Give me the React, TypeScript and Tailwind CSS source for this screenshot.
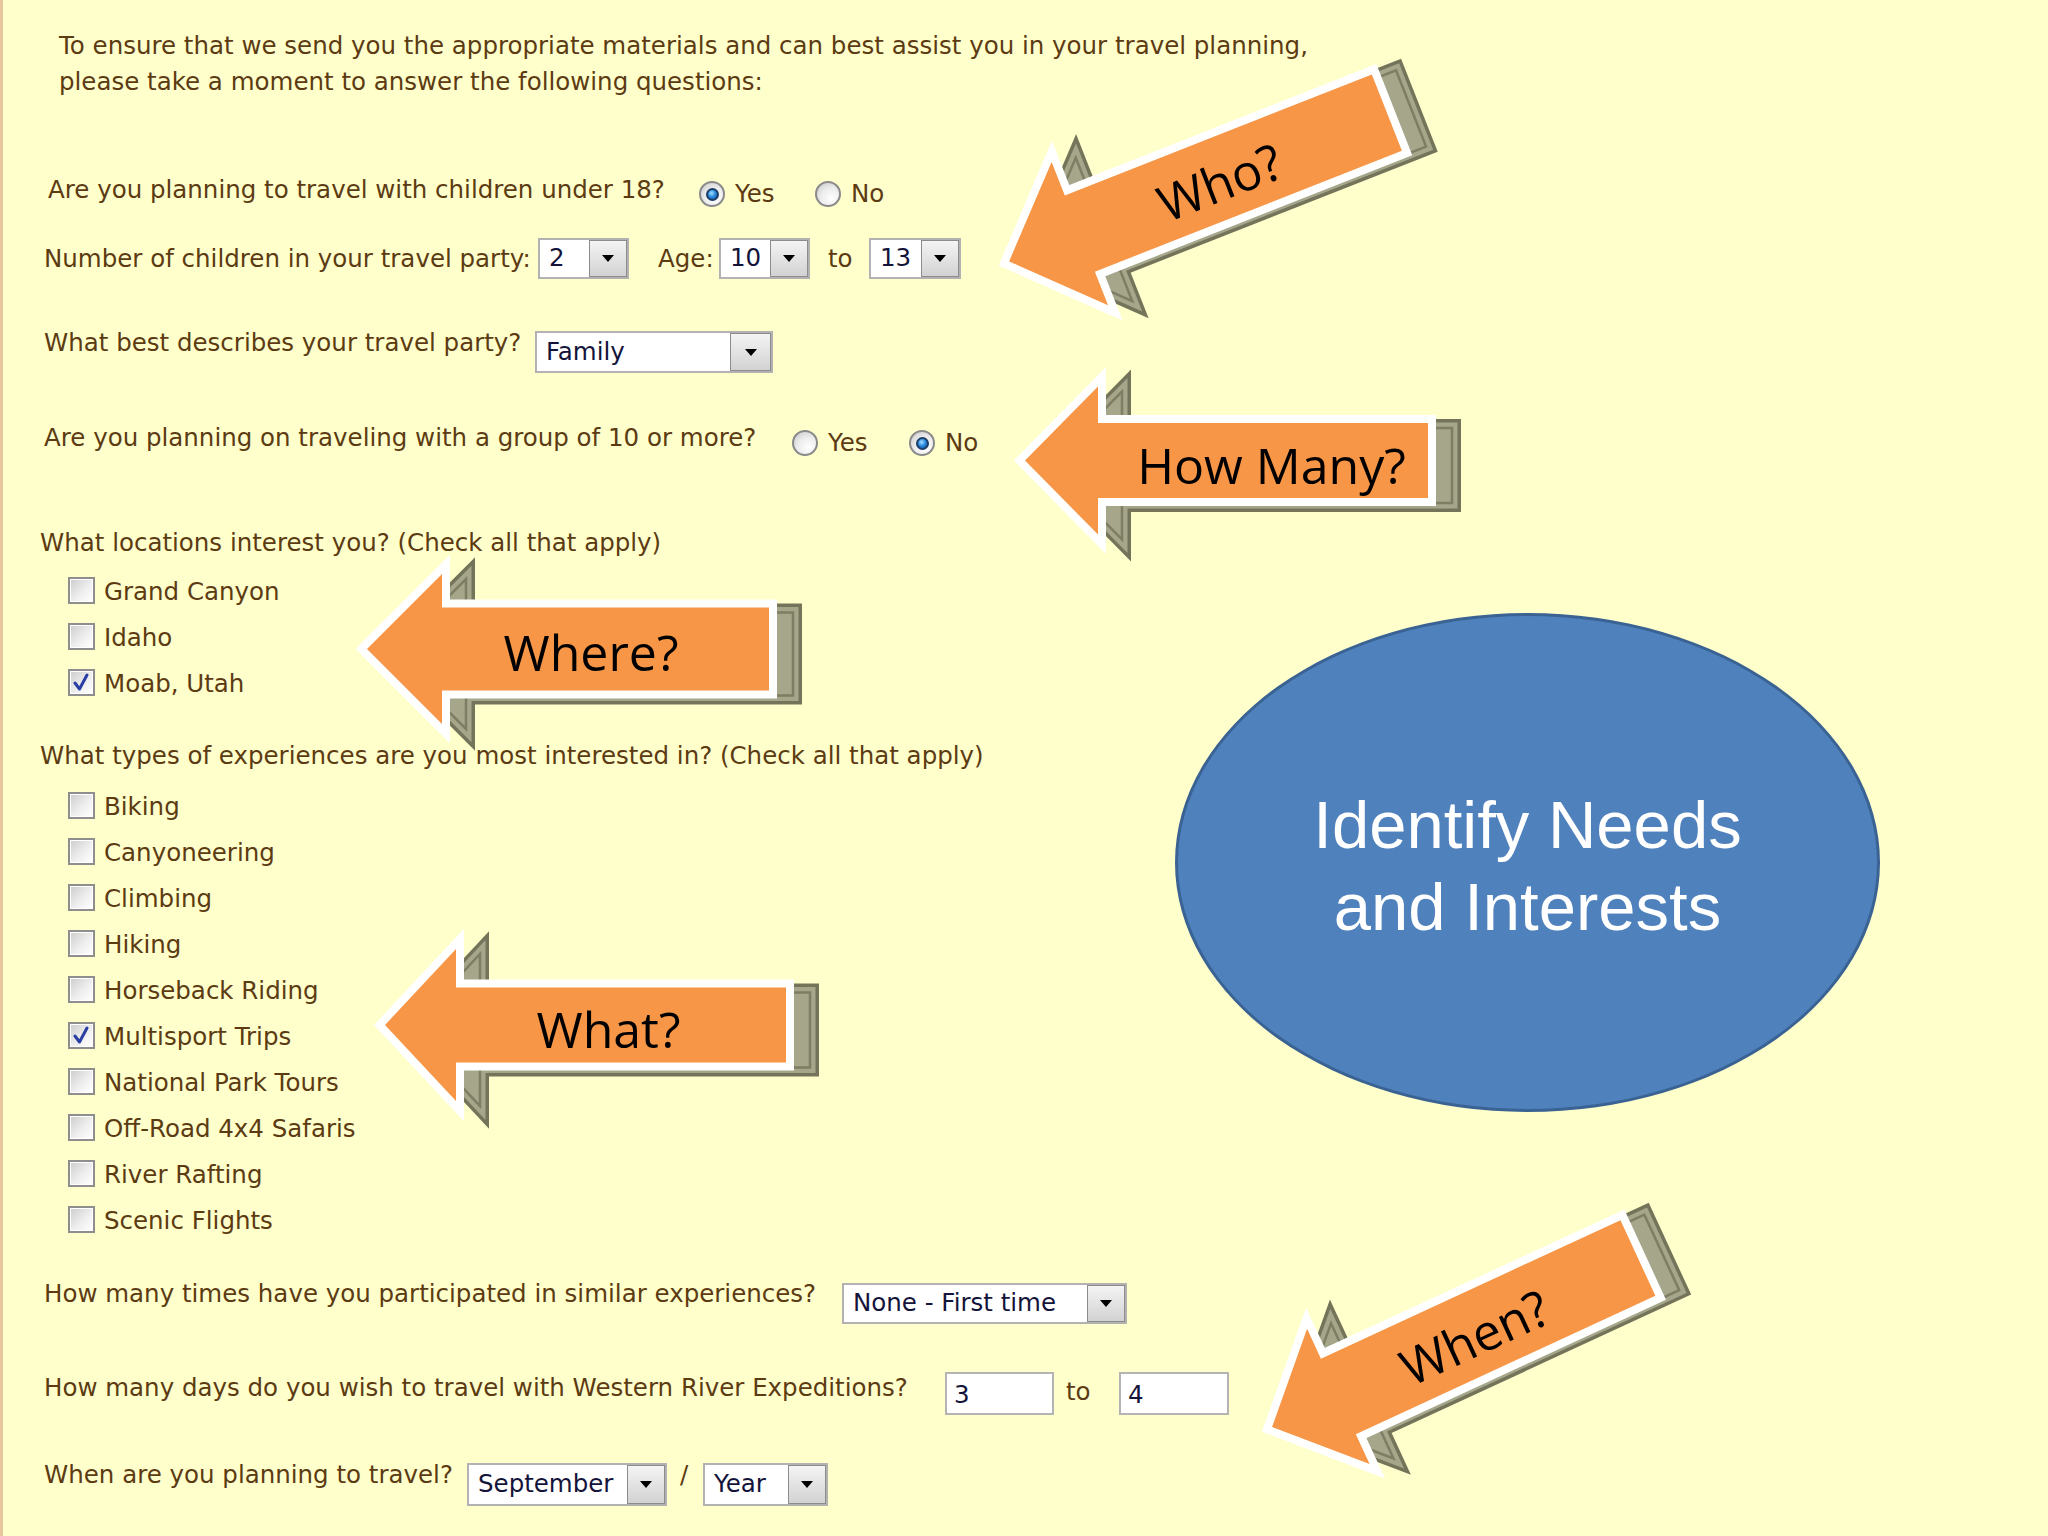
import React from "react";

const TXT = "text-[24.5px] leading-[30px] text-[#5c3b12] whitespace-nowrap";

function Radio({ checked }: { checked?: boolean }) {
  return (
    <span className="flex h-[26px] w-[26px] shrink-0 items-center justify-center rounded-full border-2 border-[#8a8a8a] bg-[radial-gradient(circle_at_65%_70%,#ffffff_0%,#ececec_50%,#c4c4c4_100%)]">
      {checked && (
        <span className="h-[13px] w-[13px] rounded-full border-2 border-[#1d3d66] bg-[radial-gradient(circle_at_40%_35%,#a8e0ff_0%,#2f90e2_45%,#0b4f9a_100%)]" />
      )}
    </span>
  );
}

function Option({ label, checked, className }: { label: string; checked?: boolean; className: string }) {
  return (
    <div className={`flex shrink-0 items-center gap-[10px] ${className}`}>
      <Radio checked={checked} />
      <span className={TXT}>{label}</span>
    </div>
  );
}

function Box({ label, checked }: { label: string; checked?: boolean }) {
  return (
    <div className="flex h-[46px] items-center gap-[9px]">
      <span className="flex h-[27px] w-[27px] shrink-0 border-2 border-[#8e8e8e] bg-white p-[1px]">
        <span className="relative h-full w-full bg-[linear-gradient(135deg,#cfcfcf_0%,#eeeeee_55%,#ffffff_100%)]">
          {checked && (
            <svg className="absolute left-0 top-0" width="21" height="21" viewBox="0 0 21 21">
              <path d="M4 11 L8.5 17 L16 3" fill="none" stroke="#2b3ea3" strokeWidth="3" strokeLinecap="round" strokeLinejoin="round" />
            </svg>
          )}
        </span>
      </span>
      <span className={`${TXT} mt-[4px]`}>{label}</span>
    </div>
  );
}

function Select({ value, className, btn = "w-[38px]" }: { value: string; className: string; btn?: string }) {
  return (
    <div className={`flex shrink-0 border-2 border-[#b2b2b2] bg-white ${className}`}>
      <span className="flex flex-1 items-center pl-[9px] text-[24.5px] text-[#14143a] whitespace-nowrap">{value}</span>
      <span className={`flex items-center justify-center border border-[#8c8c8c] bg-[linear-gradient(#f4f4f4,#d2d2d2)] ${btn}`}>
        <span className="h-0 w-0 border-x-[6px] border-t-[7px] border-x-transparent border-t-black" />
      </span>
    </div>
  );
}

function Input({ value, className }: { value: string; className: string }) {
  return (
    <div className={`flex shrink-0 items-center border-2 border-[#b4b4b4] bg-white pl-[7px] pt-[4px] text-[24.5px] text-[#14143a] ${className}`}>
      {value}
    </div>
  );
}

type ArrowProps = {
  x: number;
  y: number;
  angle?: number;
  len: number;
  head: number;
  headH: number;
  shaftH: number;
  label: string;
  tx: number;
  ty: number;
};

function Arrow({ x, y, angle = 0, len, head, headH, shaftH, label, tx, ty }: ArrowProps) {
  const h = len / 2;
  const pts = [
    [-h, 0],
    [-h + head, -headH],
    [-h + head, -shaftH],
    [h, -shaftH],
    [h, shaftH],
    [-h + head, shaftH],
    [-h + head, headH],
  ]
    .map((p) => p.join(","))
    .join(" ");
  return (
    <g transform={`translate(${x} ${y}) rotate(${angle})`}>
      {/* 3d extrusion */}
      <g transform="translate(24 5)">
        <polygon points={pts} fill="#a6a68b" stroke="#74745b" strokeWidth={18} />
        <polygon points={pts} fill="#a6a68b" stroke="#a6a68b" strokeWidth={11} />
        <polygon points={pts} fill="none" stroke="#7e7e65" strokeWidth={2.5} />
      </g>
      <polygon points={pts} fill="#F79646" stroke="#ffffff" strokeWidth={16} paintOrder="stroke" />
      <text
        x={tx}
        y={ty}
        textAnchor="middle"
        dominantBaseline="central"
        fontFamily="'Open Sans', sans-serif"
        fontSize={50}
        fill="#000"
      >
        {label}
      </text>
    </g>
  );
}

const locations = [
  { label: "Grand Canyon" },
  { label: "Idaho" },
  { label: "Moab, Utah", checked: true },
];

const experiences = [
  { label: "Biking" },
  { label: "Canyoneering" },
  { label: "Climbing" },
  { label: "Hiking" },
  { label: "Horseback Riding" },
  { label: "Multisport Trips", checked: true },
  { label: "National Park Tours" },
  { label: "Off-Road 4x4 Safaris" },
  { label: "River Rafting" },
  { label: "Scenic Flights" },
];

export default function App() {
  return (
    <div className="relative h-[1536px] w-[2048px] overflow-hidden bg-[#FFFFCC] font-['DejaVu_Sans',sans-serif]">
      <div className="absolute left-0 top-0 h-full w-[3px] bg-[#E6C79C]" />

      {/* Form */}
      <div className="flex flex-col pt-[28px]">
        <div className="ml-[59px] text-[24.5px] leading-[36px] text-[#5c3b12] whitespace-nowrap">
          <p>To ensure that we send you the appropriate materials and can best assist you in your travel planning,</p>
          <p>please take a moment to answer the following questions:</p>
        </div>

        {/* children under 18 */}
        <div className="ml-[48px] mt-[70px] flex h-[40px] items-center">
          <span className={`${TXT} w-[651px] shrink-0`}>Are you planning to travel with children under 18?</span>
          <Option label="Yes" checked className="mt-[8px] w-[116px]" />
          <Option label="No" className="mt-[8px] w-[100px]" />
        </div>

        {/* number of children */}
        <div className="ml-[44px] mt-[28px] flex h-[41px] items-center">
          <span className={`${TXT} w-[494px] shrink-0`}>Number of children in your travel party:</span>
          <Select value="2" className="h-[41px] w-[91px]" />
          <span className={`${TXT} ml-[29px] w-[61px] shrink-0`}>Age:</span>
          <Select value="10" className="h-[41px] w-[91px]" />
          <span className={`${TXT} ml-[18px] w-[41px] shrink-0`}>to</span>
          <Select value="13" className="h-[41px] w-[92px]" />
        </div>

        {/* travel party */}
        <div className="ml-[44px] mt-[49px] flex items-start">
          <span className={`${TXT} w-[491px] shrink-0`}>What best describes your travel party?</span>
          <Select value="Family" className="mt-[3px] h-[42px] w-[238px]" btn="w-[41px]" />
        </div>

        {/* group */}
        <div className="ml-[44px] mt-[47px] flex h-[40px] items-center">
          <span className={`${TXT} mb-[5px] w-[748px] shrink-0`}>Are you planning on traveling with a group of 10 or more?</span>
          <Option label="Yes" className="mt-[6px] w-[117px]" />
          <Option label="No" checked className="mt-[6px] w-[100px]" />
        </div>

        {/* locations */}
        <div className={`${TXT} ml-[40px] mt-[68px]`}>What locations interest you? (Check all that apply)</div>
        <div className="ml-[68px] mt-[9px] flex flex-col">
          {locations.map((l) => (
            <Box key={l.label} label={l.label} checked={l.checked} />
          ))}
        </div>

        {/* experiences */}
        <div className={`${TXT} ml-[40px] mt-[36px]`}>What types of experiences are you most interested in? (Check all that apply)</div>
        <div className="ml-[68px] mt-[11px] flex flex-col">
          {experiences.map((e) => (
            <Box key={e.label} label={e.label} checked={e.checked} />
          ))}
        </div>

        {/* similar experiences */}
        <div className="ml-[44px] mt-[37px] flex items-start">
          <span className={`${TXT} w-[798px] shrink-0`}>How many times have you participated in similar experiences?</span>
          <Select value="None - First time" className="mt-[4px] h-[41px] w-[285px]" />
        </div>

        {/* days */}
        <div className="ml-[44px] mt-[48px] flex items-start">
          <span className={`${TXT} mt-[1px] w-[901px] shrink-0`}>How many days do you wish to travel with Western River Expeditions?</span>
          <Input value="3" className="h-[43px] w-[109px]" />
          <span className={`${TXT} ml-[12px] w-[53px] shrink-0 leading-[40px]`}>to</span>
          <Input value="4" className="h-[43px] w-[110px]" />
        </div>

        {/* when */}
        <div className="ml-[44px] mt-[45px] flex items-start">
          <span className={`${TXT} w-[423px] shrink-0`}>When are you planning to travel?</span>
          <Select value="September" className="mt-[3px] h-[43px] w-[200px]" />
          <span className={`${TXT} ml-[13px] w-[23px] shrink-0`}>/</span>
          <Select value="Year" className="mt-[3px] h-[43px] w-[125px]" />
        </div>
      </div>

      {/* Ellipse */}
      <div className="absolute left-[1175px] top-[613px] flex h-[499px] w-[705px] flex-col items-center justify-center rounded-[50%] border-[3px] border-[#3A6394] bg-[#4F81BD] pt-[6px] font-['Liberation_Sans',Arial,sans-serif] text-[67px] leading-[82px] text-white">
        <span>Identify Needs</span>
        <span>and Interests</span>
      </div>

      {/* Arrows */}
      <svg className="pointer-events-none absolute left-0 top-0" width={2048} height={1536}>
        <Arrow x={1198} y={187} angle={-21.5} len={406} head={76} headH={77} shaftH={41} label="Who?" tx={22} ty={3} />
        <Arrow x={1226.5} y={460.5} len={403} head={73} headH={74} shaftH={37.5} label="How Many?" tx={45} ty={4} />
        <Arrow x={568} y={649} len={402} head={75} headH={75} shaftH={41.5} label="Where?" tx={23} ty={3} />
        <Arrow x={585.5} y={1025} len={401} head={71} headH={76} shaftH={37.5} label="What?" tx={23} ty={4} />
        <Arrow x={1455} y={1342.5} angle={-24.8} len={403} head={73} headH={74.5} shaftH={41.6} label="When?" tx={20} ty={3} />
      </svg>
    </div>
  );
}
